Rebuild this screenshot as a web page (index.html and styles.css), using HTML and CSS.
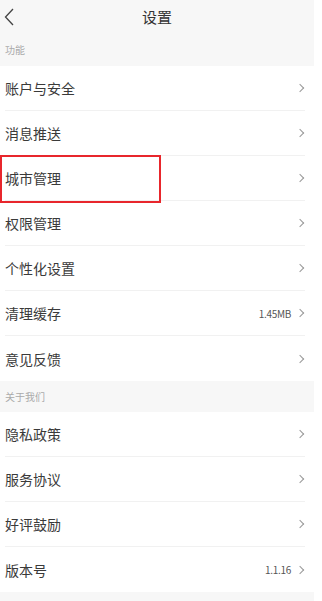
FILE: index.html
```html
<!DOCTYPE html>
<html lang="zh-CN">
<head>
    <meta charset="UTF-8">
    <meta name="viewport" content="width=device-width, initial-scale=1.0">
    <title>设置</title>
    <link rel="stylesheet" href="styles.css">
</head>
<body>
    <div class="page">
        <!-- Top bar -->
        <div class="topbar">
            <svg class="back" width="10" height="18" viewBox="0 0 10 18">
                <path d="M9 1 L1.5 9 L9 17" fill="none" stroke="#444" stroke-width="1.3"/>
            </svg>
            <div class="title">设置</div>
        </div>

        <div class="group-label">功能</div>
        <div class="list">
            <div class="row"><span class="name">账户与安全</span><span class="arrow"></span></div>
            <div class="row"><span class="name">消息推送</span><span class="arrow"></span></div>
            <div class="row highlight"><span class="name">城市管理</span><span class="arrow"></span></div>
            <div class="row"><span class="name">权限管理</span><span class="arrow"></span></div>
            <div class="row"><span class="name">个性化设置</span><span class="arrow"></span></div>
            <div class="row"><span class="name">清理缓存</span><span class="value">1.45MB</span><span class="arrow"></span></div>
            <div class="row"><span class="name">意见反馈</span><span class="arrow"></span></div>
        </div>

        <div class="group-label second">关于我们</div>
        <div class="list">
            <div class="row"><span class="name">隐私政策</span><span class="arrow"></span></div>
            <div class="row"><span class="name">服务协议</span><span class="arrow"></span></div>
            <div class="row"><span class="name">好评鼓励</span><span class="arrow"></span></div>
            <div class="row"><span class="name">版本号</span><span class="value">1.1.16</span><span class="arrow"></span></div>
        </div>
    </div>
</body>
</html>
```

FILE: styles.css
```css
* {
    margin: 0;
    padding: 0;
    box-sizing: border-box;
}

html, body {
    width: 322px;
    height: 601px;
    overflow: hidden;
    background: #fff;
}

body {
    font-family: "Noto Sans CJK SC", "Noto Sans", sans-serif;
    color: #333;
}

.page {
    width: 314px;
    min-height: 601px;
    background: #f7f7f7;
}

.topbar {
    height: 34px;
    display: flex;
    align-items: center;
    justify-content: center;
    position: relative;
}

.back {
    position: absolute;
    left: 4px;
    top: 8px;
}

.title {
    font-size: 15px;
    color: #333;
    line-height: 34px;
}

.group-label {
    height: 32px;
    line-height: 32px;
    padding-left: 5px;
    font-size: 10px;
    color: #aaa;
}

.group-label.second {
    height: 31px;
    line-height: 31px;
}

.list {
    background: #fff;
}

.row {
    height: 45px;
    margin: 0 9px 0 5px;
    display: flex;
    align-items: center;
    border-bottom: 1px solid #f1f1f1;
    position: relative;
}

.row:last-child {
    border-bottom: none;
}

.name {
    flex: 1;
    font-size: 14px;
    color: #3a3a3a;
}

.value {
    font-size: 10px;
    color: #555;
    margin-right: 6px;
    letter-spacing: -0.3px;
}

.arrow {
    width: 6px;
    height: 6px;
    border-top: 1px solid #999;
    border-right: 1px solid #999;
    transform: rotate(45deg);
    margin-right: 2px;
}

/* annotation box */
.highlight::after {
    content: "";
    position: absolute;
    left: -5px;
    top: -1px;
    width: 157px;
    height: 44px;
    border: 2px solid #e8262c;
}
```
